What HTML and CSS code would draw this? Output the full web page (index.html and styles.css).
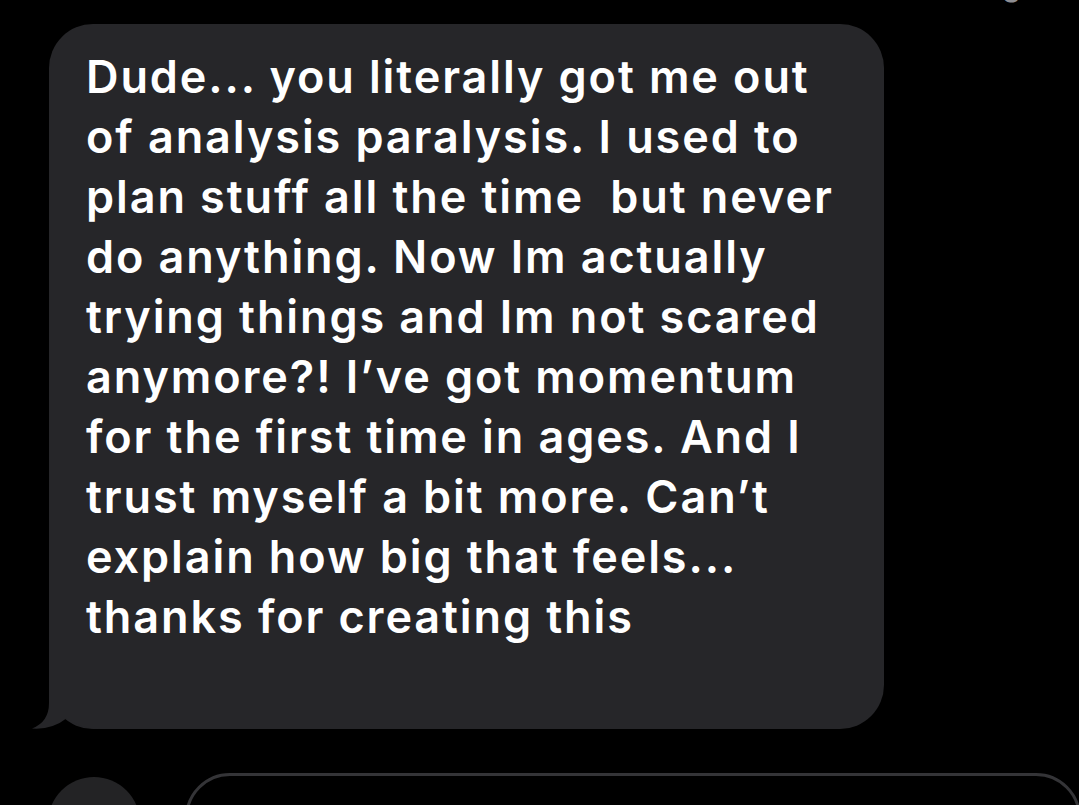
FILE: index.html
```html
<!DOCTYPE html>
<html>
<head>
<meta charset="utf-8">
<link rel="stylesheet" href="styles.css">
</head>
<body>
<div class="screen">
  <div class="status"><span class="status-text">Delivered · 4 ago</span></div>
  <div class="thread">
    <div class="bubble">
      <p class="msg">Dude... you literally got me out<br>of analysis paralysis. I used to<br>plan stuff all the time&nbsp; but never<br>do anything. Now Im actually<br>trying things and Im not scared<br>anymore?! I’ve got momentum<br>for the first time in ages. And I<br>trust myself a bit more. Can’t<br>explain how big that feels...<br>thanks for creating this</p>
      <svg class="tail" width="80" height="49" viewBox="0 0 80 49"><path d="M19 0 L19 23 Q19 42 2 48.5 Q22 50 37 38 Q50 49 70 49 L80 49 L80 0 Z" fill="#262629"/></svg>
    </div>
  </div>
  <div class="composer">
    <div class="plus"></div>
    <div class="field"></div>
  </div>
</div>
</body>
</html>
```
FILE: styles.css
```css
* { box-sizing: border-box; }
html, body { margin: 0; padding: 0; background: #000; }
body { width: 1079px; height: 805px; overflow: hidden; font-family: Inter, "Noto Sans", sans-serif; }
.screen { position: relative; width: 1079px; height: 805px; display: flex; flex-direction: column; overflow: hidden; }
.screen > * { flex: none; }
.status { height: 24px; position: relative; overflow: hidden; }
.status-text { position: absolute; right: 40px; top: -33px; color: #8e8e93; font-size: 30px; font-weight: 500; line-height: 36px; }
.thread { display: flex; padding-left: 49px; }
.bubble { position: relative; width: 835px; height: 705px; background: #262629; border-radius: 44px; padding: 23px 0 0 37px; }
.msg { margin: 0; color: #fff; font-size: 45px; line-height: 60px; font-weight: 580; letter-spacing: 1.9px; white-space: nowrap; }
.tail { position: absolute; left: -19px; bottom: 0; display: block; }
.composer { display: flex; align-items: flex-start; padding-top: 44px; padding-left: 48px; gap: 45px; }
.plus { width: 92px; height: 92px; border-radius: 50%; background: #232325; margin-top: 4px; flex: none; }
.field { flex: 1; height: 90px; border: 3px solid #343437; border-radius: 46px; margin-right: -2px; }
```
